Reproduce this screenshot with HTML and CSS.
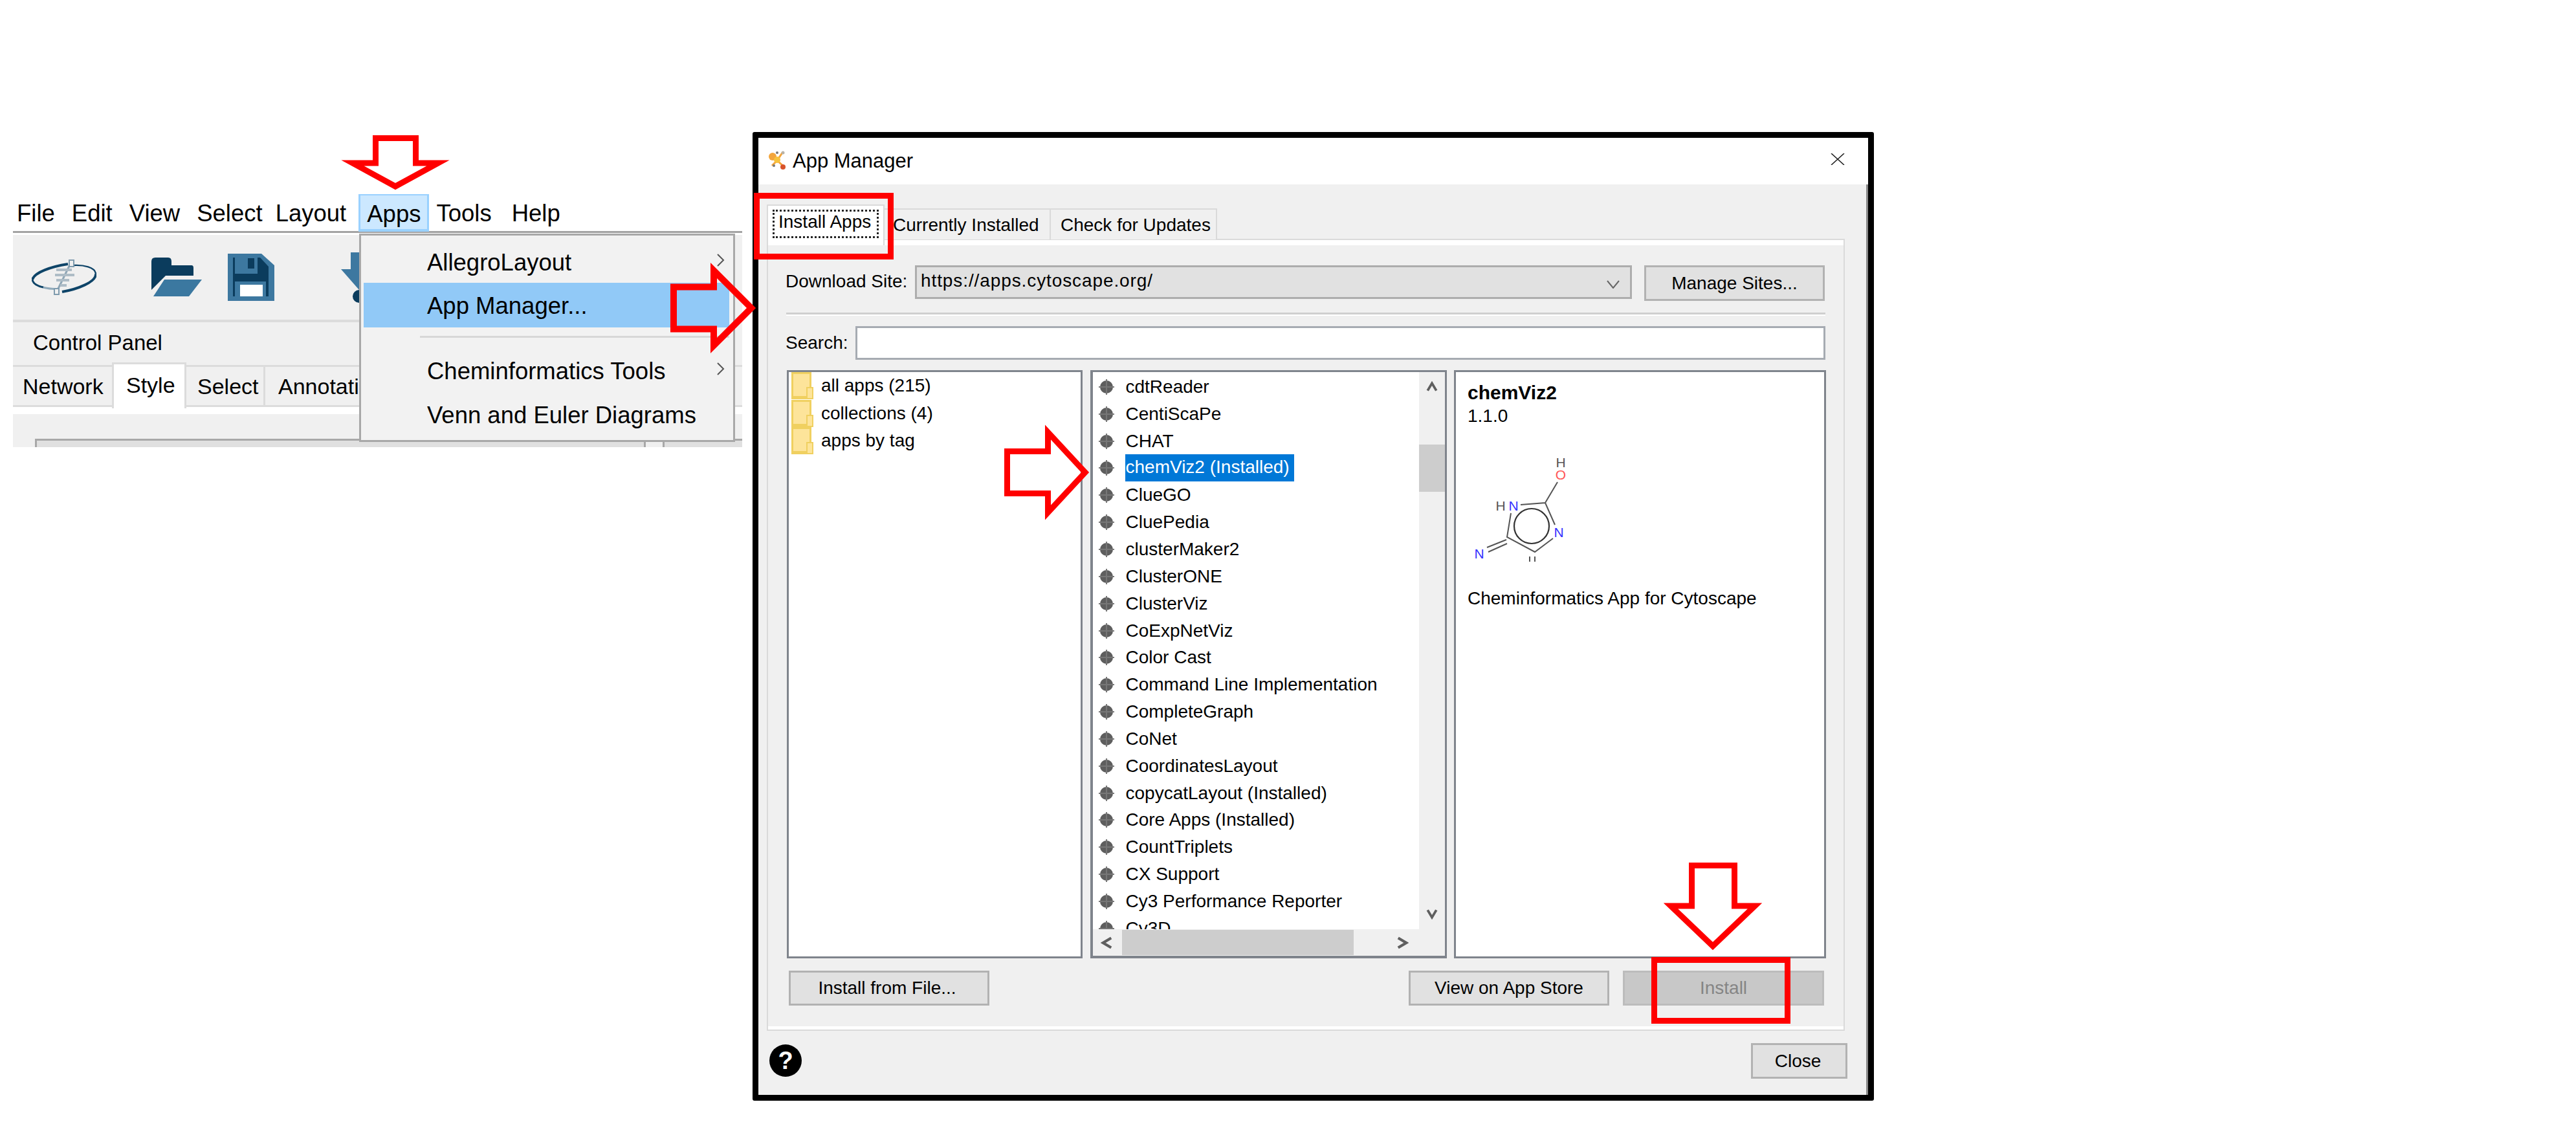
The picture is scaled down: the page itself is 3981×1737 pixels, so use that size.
FILE: index.html
```html
<!DOCTYPE html>
<html lang="en">
<head>
  <meta charset="UTF-8">
  <title>App Manager</title>
  <link rel="stylesheet" href="styles.css">
</head>
<body>
  <svg class="defs" width="0" height="0">
    <symbol id="dot" viewBox="0 0 24 24">
      <circle cx="12" cy="12" r="10" fill="#5e5e5e"/>
      <path d="M12 0v24M0 12h24" stroke="#777" stroke-width="2"/>
    </symbol>
    <symbol id="chev" viewBox="0 0 16 16">
      <path d="M2 3l6 10 6-10" fill="none" stroke="#5f5f5f" stroke-width="3.4"/>
    </symbol>
    <symbol id="thin" viewBox="0 0 14 20">
      <path d="M2 1l9 9-9 9" fill="none" stroke="#555" stroke-width="2"/>
    </symbol>
  </svg>

  <div class="canvas">

    <div class="app">
      <div class="menubar">
        <span class="menu-item">File</span>
        <span class="menu-item">Edit</span>
        <span class="menu-item">View</span>
        <span class="menu-item">Select</span>
        <span class="menu-item menu-layout">Layout</span>
        <span class="menu-item active">Apps</span>
        <span class="menu-item menu-tools">Tools</span>
        <span class="menu-item menu-help">Help</span>
      </div>
      <div class="toolbar">
        <svg class="ico-logo" viewBox="0 0 100 56">
          <g fill="none" stroke="#0e4468">
            <path d="M1 31C4 20 30 11 56 7" stroke-width="4"/>
            <path d="M47 50C70 46 100 35 99 22" stroke-width="4"/>
            <path d="M64 9C80 8 98 12 99 22" stroke-width="2.4"/>
            <path d="M1 31C2 38 8 41 18 43" stroke-width="3"/>
            <path d="M18 43C24 45 30 45 38 46" stroke="#8fa9ba" stroke-width="3"/>
          </g>
          <path d="M61 4L38 51" stroke="#8fa6b6" stroke-width="3"/>
          <path d="M38 16h24M36 24h30M38 32h20M44 40h10" stroke="#aebcc6" stroke-width="4"/>
          <rect x="58" y="1" width="7" height="10" fill="#f0f0f0" stroke="#7f9bae" stroke-width="2"/>
          <rect x="35" y="45" width="7" height="9" fill="#f0f0f0" stroke="#7f9bae" stroke-width="2"/>
        </svg>
        <svg class="ico-folder" viewBox="0 0 78 62">
          <path d="M0 6Q0 0 6 0H26Q31 0 31 6V12H62Q65 12 65 16V28H22L0 50Z" fill="#0b3c5d"/>
          <path d="M20 34H78L58 60H3Z" fill="#3b78a0"/>
        </svg>
        <svg class="ico-save" viewBox="0 0 72 73">
          <path d="M0 0H52L72 18V73H0Z" fill="#3d78a0"/>
          <path d="M8 6H50L63 20V66H8Z" fill="#0b3c5d"/>
          <rect x="11" y="4" width="35" height="27" fill="#3d78a0"/>
          <rect x="31" y="7" width="10" height="16" fill="#0b3c5d"/>
          <rect x="11" y="43" width="48" height="23" fill="#3d78a0"/>
          <rect x="19" y="48" width="35" height="18" fill="#fff"/>
        </svg>
        <svg class="ico-import" viewBox="0 0 28 78">
          <path d="M15 0H28V58L0 26H15Z" fill="#3d78a0"/>
          <circle cx="28" cy="68" r="10" fill="#0b3c5d"/>
        </svg>
      </div>
      <div class="panel-title">Control Panel</div>
      <div class="panel-tabs">
        <span class="panel-tab tab-network">Network</span>
        <span class="panel-tab tab-style">Style</span>
        <span class="panel-tab tab-select">Select</span>
        <span class="panel-tab tab-annot">Annotation</span>
      </div>
      <div class="panel-body">
        <div class="style-box">
          <div class="style-cell"></div>
          <div class="style-gap"></div>
          <div class="style-rest"></div>
        </div>
      </div>

      <div class="dropdown">
        <div class="drop-item">AllegroLayout<svg class="drop-arrow"><use href="#thin"/></svg></div>
        <div class="drop-item selected">App Manager...</div>
        <div class="drop-sep"></div>
        <div class="drop-item">Cheminformatics Tools<svg class="drop-arrow"><use href="#thin"/></svg></div>
        <div class="drop-item">Venn and Euler Diagrams</div>
      </div>
    </div>

    <div class="dialog">
      <div class="titlebar">
        <svg class="ico-app" viewBox="0 0 28 30">
          <path d="M6 8l8 8 10 9M22 4l-8 12-8 8" fill="none" stroke="#f3a53c" stroke-width="3"/>
          <circle cx="7" cy="10" r="6" fill="#f3a53c"/>
          <circle cx="14" cy="15" r="5" fill="#f7c23c"/>
          <circle cx="23" cy="26" r="4" fill="#d8532b"/>
          <circle cx="23" cy="4" r="2.5" fill="#b9b3a8"/>
          <circle cx="14" cy="4" r="2" fill="#777"/>
          <circle cx="9" cy="24" r="2" fill="#777"/>
        </svg>
        <span class="title-text">App Manager</span>
        <svg class="ico-close" viewBox="0 0 22 18">
          <path d="M1 0l20 18M21 0L1 18" stroke="#222" stroke-width="1.6"/>
        </svg>
      </div>

      <div class="dialog-body">
        <div class="tabs">
          <div class="tab current"><span class="focus">Install Apps</span></div>
          <div class="tab tab-installed">Currently Installed</div>
          <div class="tab tab-updates">Check for Updates</div>
        </div>

        <div class="pane">
          <div class="band"></div>
          <div class="pane-in">
            <div class="site-row">
              <label class="site-label">Download Site:</label>
              <div class="combo">
                <span>https://apps.cytoscape.org/</span>
                <svg class="combo-arrow" viewBox="0 0 20 13"><path d="M1 1l9 11 9-11" fill="none" stroke="#666" stroke-width="2"/></svg>
              </div>
              <button class="btn btn-sites">Manage Sites...</button>
            </div>
            <div class="sep"></div>
            <div class="search-row">
              <label class="search-label">Search:</label>
              <input class="search" type="text">
            </div>

            <div class="columns">
              <div class="box tree">
                <div class="tree-row"><i class="folder"></i>all apps (215)</div>
                <div class="tree-row"><i class="folder"></i>collections (4)</div>
                <div class="tree-row"><i class="folder"></i>apps by tag</div>
              </div>

              <div class="box scroller">
                <div class="app-list">
                  <div class="app-row"><svg class="dot"><use href="#dot"/></svg>cdtReader</div>
                  <div class="app-row"><svg class="dot"><use href="#dot"/></svg>CentiScaPe</div>
                  <div class="app-row"><svg class="dot"><use href="#dot"/></svg>CHAT</div>
                  <div class="app-row"><svg class="dot"><use href="#dot"/></svg><span class="picked">chemViz2 (Installed)</span></div>
                  <div class="app-row"><svg class="dot"><use href="#dot"/></svg>ClueGO</div>
                  <div class="app-row"><svg class="dot"><use href="#dot"/></svg>CluePedia</div>
                  <div class="app-row"><svg class="dot"><use href="#dot"/></svg>clusterMaker2</div>
                  <div class="app-row"><svg class="dot"><use href="#dot"/></svg>ClusterONE</div>
                  <div class="app-row"><svg class="dot"><use href="#dot"/></svg>ClusterViz</div>
                  <div class="app-row"><svg class="dot"><use href="#dot"/></svg>CoExpNetViz</div>
                  <div class="app-row"><svg class="dot"><use href="#dot"/></svg>Color Cast</div>
                  <div class="app-row"><svg class="dot"><use href="#dot"/></svg>Command Line Implementation</div>
                  <div class="app-row"><svg class="dot"><use href="#dot"/></svg>CompleteGraph</div>
                  <div class="app-row"><svg class="dot"><use href="#dot"/></svg>CoNet</div>
                  <div class="app-row"><svg class="dot"><use href="#dot"/></svg>CoordinatesLayout</div>
                  <div class="app-row"><svg class="dot"><use href="#dot"/></svg>copycatLayout (Installed)</div>
                  <div class="app-row"><svg class="dot"><use href="#dot"/></svg>Core Apps (Installed)</div>
                  <div class="app-row"><svg class="dot"><use href="#dot"/></svg>CountTriplets</div>
                  <div class="app-row"><svg class="dot"><use href="#dot"/></svg>CX Support</div>
                  <div class="app-row"><svg class="dot"><use href="#dot"/></svg>Cy3 Performance Reporter</div>
                  <div class="app-row"><svg class="dot"><use href="#dot"/></svg>Cy3D</div>
                </div>
                <div class="vbar">
                  <svg class="chev-up"><use href="#chev"/></svg>
                  <div class="vthumb"></div>
                  <svg class="chev-down"><use href="#chev"/></svg>
                </div>
                <div class="hbar">
                  <svg class="chev-left"><use href="#chev"/></svg>
                  <div class="hthumb"></div>
                  <svg class="chev-right"><use href="#chev"/></svg>
                </div>
              </div>

              <div class="box details">
                <div class="det-name">chemViz2</div>
                <div class="det-line">1.1.0</div>
                <svg class="molecule" viewBox="2268 700 160 175">
                  <g fill="none" stroke="#555" stroke-width="2">
                    <path d="M2407 745L2388 777L2350 780M2388 777L2403 811M2400 832L2372 853L2329 830L2335 793"/>
                    <path d="M2328 834L2298 846M2329 840L2300 853"/>
                    <path d="M2364 860v8M2372 860v8"/>
                  </g>
                  <circle cx="2367" cy="813" r="27" fill="none" stroke="#333" stroke-width="2.2"/>
                  <text class="atom a-h" x="2412" y="722">H</text>
                  <text class="atom a-o" x="2412" y="741">O</text>
                  <text class="atom a-h" x="2319" y="789">H</text>
                  <text class="atom a-n" x="2339" y="789">N</text>
                  <text class="atom a-n" x="2409" y="830">N</text>
                  <text class="atom a-n" x="2286" y="863">N</text>
                </svg>
                <div class="det-line det-desc">Cheminformatics App for Cytoscape</div>
              </div>
            </div>

            <div class="actions">
              <button class="btn btn-file">Install from File...</button>
              <button class="btn btn-store">View on App Store</button>
              <button class="btn btn-install" disabled>Install</button>
            </div>
          </div>
          <div class="band band-low"></div>
        </div>

        <div class="footer">
          <span class="help">?</span>
          <button class="btn btn-close">Close</button>
        </div>
      </div>
    </div>

    <!-- red callouts drawn over the screenshots -->
    <svg class="marks" viewBox="0 0 3981 1737">
      <g fill="none" stroke="#f00" stroke-width="9" stroke-miterlimit="10">
        <path d="M580.5 213.5H642.5V252H677L611 288L545 252H580.5Z"/>
        <path d="M1041 443.5H1103V418L1161 476L1103 534V508.5H1041Z" stroke-width="10"/>
        <path d="M1556.5 697.5H1619.5V668L1677 730L1619.5 792V762.5H1556.5Z"/>
        <path d="M2614.5 1337.5H2680.5V1400H2712L2647 1462L2582 1400H2614.5Z"/>
        <rect x="1169.5" y="302.5" width="207" height="94"/>
        <rect x="2556.5" y="1483.5" width="206" height="94"/>
      </g>
    </svg>
  </div>
</body>
</html>
```

FILE: styles.css
```css
* { box-sizing: border-box; }
html, body { margin: 0; background: #fff; }
body { font-family: "Liberation Sans", Arial, sans-serif; font-size: 28px; color: #000; overflow: hidden; }
button, input { font: inherit; color: inherit; margin: 0; }
.defs { position: absolute; }

.canvas { position: relative; width: 3981px; height: 1737px; overflow: hidden; }
.marks { position: absolute; left: 0; top: 0; width: 3981px; height: 1737px; pointer-events: none; }

/* main window crop */
.app { position: absolute; left: 20px; top: 300px; width: 1127px; height: 391px; overflow: hidden; font-size: 36.5px; white-space: nowrap; }

.menubar { display: flex; height: 60px; align-items: center; border-bottom: 3px solid #a3a3a3; }
.menu-item { padding: 0 13px; height: 59px; line-height: 62px; }
.menu-item:first-child { padding-left: 6px; }
.menu-layout { margin-left: -6px; }
.menu-item.active { background: #cce8ff; border: 3px solid #99d1ff; border-bottom-width: 4px; padding: 0 10px; margin: 0 0 0 6px; line-height: 58px; }
.menu-tools { margin-left: -2px; }
.menu-help { margin-left: 5px; }

.toolbar { display: flex; align-items: center; height: 135px; margin-top: 3px; padding-left: 29px; background: #f0f0f0; border-bottom: 4px solid #dcdcdc; }
.ico-logo { width: 100px; height: 56px; flex: none; }
.ico-folder { width: 78px; height: 62px; flex: none; margin-left: 85px; }
.ico-save { width: 72px; height: 73px; flex: none; margin-left: 40px; }
.ico-import { width: 28px; height: 78px; flex: none; margin-left: 103px; }

.panel-title { height: 69px; line-height: 64px; padding-left: 31px; font-size: 33px; background: #f0f0f0; border-bottom: 3px solid #dcdcdc; }
.panel-tabs { display: flex; height: 62px; background: #f0f0f0; font-size: 34px; border-bottom: 3px solid #dcdcdc; }
.panel-tab { height: 62px; line-height: 60px; border-right: 3px solid #dcdcdc; }
.tab-network { width: 153px; padding-left: 15px; border-right: 0; }
.tab-style { width: 115px; height: 71px; margin-top: -7px; padding-left: 19px; line-height: 64px; background: #fff; border: 3px solid #dcdcdc; border-bottom: 0; position: relative; }
.tab-select { width: 122px; padding-left: 17px; }
.tab-annot { padding-left: 20px; border-right: 0; }

.panel-body { height: 62px; background: #f0f0f0; border-top: 11px solid #fff; padding: 38px 0 0 34px; }
.style-box { display: flex; height: 13px; border: 3px solid #a8a8a8; border-right: 0; border-bottom: 0; background: #e0e0e0; }
.style-cell { width: 941px; border-right: 3px solid #a8a8a8; }
.style-gap { width: 29px; background: #f0f0f0; border-right: 3px solid #a8a8a8; }
.style-rest { flex: 1; }

.dropdown { position: absolute; left: 535px; top: 61px; width: 581px; height: 322px; padding: 5px 6px 0 4px; background: #f2f2f2; border: 3px solid #a8a8a8; }
.drop-item { display: flex; align-items: center; justify-content: space-between; height: 68px; padding: 0 6px 0 98px; }
.drop-item:first-child { padding-top: 6px; }
.drop-item.selected { height: 69px; padding-top: 3px; background: #91c9f7; }
.drop-sep { height: 3px; margin: 13px 0 18px 87px; background: #d7d7d7; }
.drop-arrow { width: 14px; height: 20px; margin-top: -8px; }

/* dialog */
.dialog { position: absolute; left: 1163px; top: 204px; width: 1733px; height: 1497px; display: flex; flex-direction: column; border: 9px solid #000; border-radius: 3px; }
.titlebar { display: flex; align-items: center; flex: none; height: 72px; padding-left: 15px; background: #fff; }
.ico-app { width: 28px; height: 30px; flex: none; margin-top: -4px; }
.title-text { margin-left: 10px; font-size: 31px; }
.ico-close { width: 22px; height: 18px; margin-left: auto; margin-right: 36px; margin-top: -6px; }

.dialog-body { flex: 1; padding: 31px 33px 0 13px; background: #f0f0f0; border-right: 3px solid #8a8a8a; }

.tabs { display: flex; align-items: flex-end; height: 54px; }
.tab { height: 48px; line-height: 48px; border: 2px solid #dadada; border-bottom: 0; background: #f0f0f0; white-space: nowrap; }
.tab.current { width: 182px; height: 63px; margin-bottom: -9px; padding: 6px 7px; background: #fff; position: relative; z-index: 1; }
.focus { display: block; height: 44px; line-height: 38px; padding-left: 9px; outline: 3px dotted #222; outline-offset: -3px; }
.tab-installed { width: 257px; padding-left: 13px; border-left: 0; }
.tab-updates { width: 257px; padding-left: 15px; border-left: 0; }

.pane { height: 1224px; margin-top: -1px; border: 2px solid #dadada; display: flex; flex-direction: column; }
.band { height: 8px; background: #fff; flex: none; }
.band-low { height: 5px; }
.pane-in { flex: 1; padding: 31px 28px 0 27px; }

.site-row { display: flex; align-items: flex-start; }
.site-label { width: 200px; line-height: 50px; flex: none; }
.combo { display: flex; align-items: center; justify-content: space-between; width: 1108px; height: 52px; padding: 0 16px 0 6px; background: #e1e1e1; border: 3px solid #adadad; }
.combo span { margin-top: -4px; letter-spacing: 0.9px; }
.combo-arrow { width: 20px; height: 13px; margin-top: 6px; }

.btn { background: #e1e1e1; border: 3px solid #b2b2b2; padding: 0; white-space: nowrap; }
.btn-sites { width: 279px; height: 55px; margin-left: 19px; }

.sep { height: 5px; margin: 18px 0 16px 1px; border-top: 3px solid #cfcfcf; border-bottom: 2px solid #fff; }

.search-row { display: flex; }
.search-label { width: 108px; line-height: 52px; flex: none; }
.search { flex: 1; height: 52px; background: #fff; border: 3px solid #a6abb2; outline: 0; border-radius: 0; }

.columns { display: grid; grid-template-columns: 457px 551px 575px; column-gap: 11.5px; height: 909px; margin: 16px 0 0 2px; }
.box { background: #fff; border: 3px solid #7f848c; overflow: hidden; }

.tree-row { display: flex; align-items: center; height: 42.5px; padding-left: 4px; white-space: nowrap; }
.folder { position: relative; flex: none; width: 31px; height: 42px; margin-right: 15px; background: #fde49a; border: 3px solid #f0d060; border-bottom-width: 5px; }
.folder::after { content: ""; position: absolute; right: -6px; top: 20px; width: 7px; height: 15px; background: #fde49a; border: 2px solid #f0d060; }

.scroller { display: grid; grid-template-columns: 1fr 40px; grid-template-rows: 861px 1fr; border-left-width: 4px; border-bottom-width: 4px; }
.app-list { height: 861px; padding-top: 2px; overflow: hidden; }
.app-row { display: flex; align-items: center; height: 41.85px; padding-left: 9px; white-space: nowrap; }
.dot { width: 24px; height: 24px; flex: none; margin-right: 18px; }
.picked { height: 42px; line-height: 40px; margin-left: -1px; padding: 0 7px 0 1px; background: #0078d7; color: #fff; }

.vbar { display: flex; flex-direction: column; align-items: center; background: #f0f0f0; }
.chev-up, .chev-down { width: 18px; height: 18px; flex: none; }
.chev-up { margin-top: 14px; transform: rotate(180deg); }
.chev-down { margin-top: auto; margin-bottom: 15px; }
.vthumb { width: 100%; height: 73px; flex: none; margin-top: 80px; background: #cdcdcd; }

.hbar { grid-column: 1 / 3; display: flex; align-items: center; padding-left: 12px; background: #f0f0f0; }
.chev-left, .chev-right { width: 20px; height: 20px; flex: none; }
.chev-left { transform: rotate(90deg); margin-right: 13px; }
.chev-right { transform: rotate(-90deg); margin-left: 65px; }
.hthumb { width: 358px; height: 39px; background: #cdcdcd; }

.details { padding: 14px 0 0 18px; }
.det-name { font-size: 30px; font-weight: bold; line-height: 36px; }
.det-line { line-height: 36px; white-space: nowrap; }
.molecule { display: block; width: 160px; height: 175px; margin-top: 39px; }
.det-desc { margin-top: 32px; }
.atom { font-size: 21px; text-anchor: middle; }
.a-h { fill: #555; }
.a-o { fill: #f55; }
.a-n { fill: #33f; }

.actions { display: flex; margin: 19px 2px 0 5px; }
.actions .btn { height: 54px; width: 310px; }
.btn-file { padding-right: 6px; }
.btn-store { margin-left: auto; }
.actions .btn-install { width: 311px; margin-left: 21px; background: #c8c8c8; border-color: #bcbcbc; color: #858585; }

.footer { display: flex; align-items: flex-start; justify-content: space-between; padding: 19px 0 0 4px; margin-right: -4px; }
.help { width: 50px; height: 50px; margin-top: 2px; border-radius: 50%; background: #000; color: #fff; font-size: 38px; font-weight: bold; line-height: 50px; text-align: center; }
.btn-close { width: 149px; height: 55px; padding-right: 4px; }
```
